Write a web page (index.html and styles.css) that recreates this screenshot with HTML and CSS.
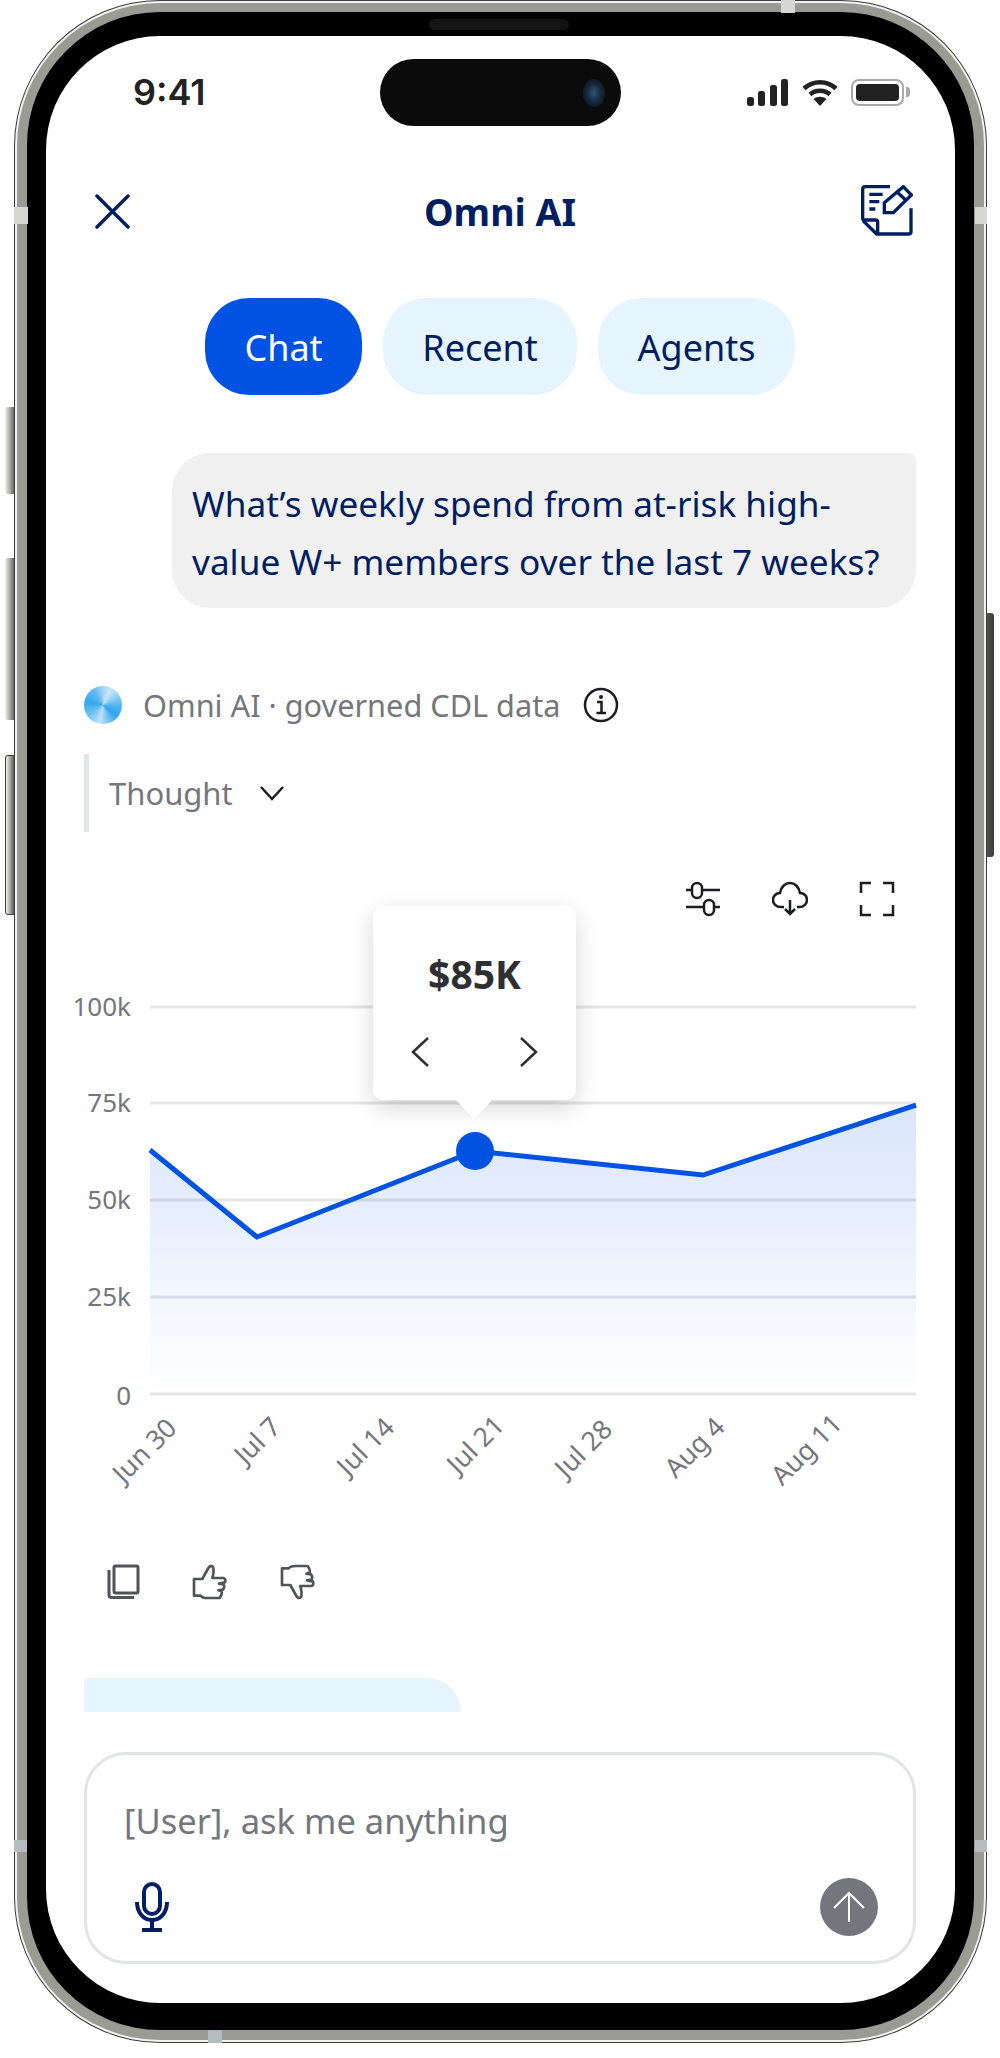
FILE: index.html
```html
<!DOCTYPE html>
<html lang="en">

<head>
  <meta charset="UTF-8">
  <meta name="viewport" content="width=device-width, initial-scale=1.0">
  <title>Omni AI</title>
  <link rel="stylesheet" href="styles.css">
</head>

<body>
  <div class="stage">
    <!-- hardware buttons and antenna bands sit on the frame -->
    <span class="side-btn btn-action"></span>
    <span class="side-btn btn-up"></span>
    <span class="side-btn btn-down"></span>
    <span class="side-btn btn-power"></span>

    <div class="phone">
      <div class="phone-rim">
        <div class="phone-band">
          <div class="phone-bezel">
            <span class="speaker"></span>
            <div class="screen">

              <div class="status-bar">
                <span class="clock">9:41</span>
                <div class="island"><span class="camera"></span></div>
                <div class="status-icons">
                  <svg width="42" height="27" viewBox="0 0 42 27">
                    <rect x="0" y="18" width="7" height="9" rx="2.5" />
                    <rect x="11" y="12" width="7" height="15" rx="2.5" />
                    <rect x="23" y="6" width="7" height="21" rx="2.5" />
                    <rect x="34" y="0" width="7" height="27" rx="2.5" />
                  </svg>
                  <svg width="36" height="27" viewBox="0 0 36 27">
                    <path class="wifi" d="M2 9.5C11 1 25 1 34 9.5M8 15.5C13.500 10.500 22.500 10.500 28 15.500" />
                    <path d="M11.500 20C15 17 21 17 24.500 20L18 27Z" />
                  </svg>
                  <div class="battery"><span class="battery-level"></span></div>
                </div>
              </div>

              <div class="header">
                <svg class="icon-close" width="35" height="35" viewBox="0 0 35 35">
                  <path d="M2 2L33 33M33 2L2 33" />
                </svg>
                <h1>Omni AI</h1>
                <svg class="icon-edit" width="52" height="52" viewBox="63 75 156 156">
                  <path d="M150 80H76Q68 80 68 88V175Q68 180 72 185L110 222H205Q213 222 213 215V145" />
                  <path d="M72 180H106Q113 180 113 187V222" />
                  <path d="M88 103H128M88 125H118M88 147H106" />
                  <path d="M133 158V128L190 80L214 105L160 158ZM172 97L197 120" />
                </svg>
              </div>

              <div class="tabs">
                <a class="tab tab-active">Chat</a>
                <a class="tab tab-recent">Recent</a>
                <a class="tab tab-agents">Agents</a>
              </div>

              <div class="bubble">What’s weekly spend from at-risk high-value W+ members over the last 7 weeks?</div>

              <div class="source">
                <span class="orb"></span>
                <span class="source-text">Omni AI · governed CDL data</span>
                <svg class="icon-info" width="36" height="36" viewBox="0 0 36 36">
                  <circle cx="18" cy="18" r="16" />
                  <path d="M14 15H18.500V26M13.500 26H23" />
                  <circle class="dot" cx="18" cy="10" r="2" />
                </svg>
              </div>

              <div class="thought">
                <span>Thought</span>
                <svg class="icon-chevron" width="26" height="16" viewBox="0 0 26 16">
                  <path d="M2 2L13 14L24 2" />
                </svg>
              </div>

              <div class="chart-tools">
                <svg width="36" height="36" viewBox="0 0 36 36">
                  <path d="M1 9H7M17 9H35M1 26H19M29 26H35" />
                  <rect x="7" y="2" width="10" height="15" rx="5" />
                  <rect x="19" y="19" width="10" height="15" rx="5" />
                </svg>
                <svg width="36" height="36" viewBox="0 0 36 36">
                  <path d="M12 26H9C4 26 1 22.500 1 19C1 15 4 12 8 12C9 6 13 2 18 2C23 2 27 6 28 12C32 12 35 15 35 19C35 22.500 32 26 27 26H25" />
                  <path d="M18 19V33M13 28L18 33L23 28" />
                </svg>
                <svg width="36" height="36" viewBox="0 0 36 36">
                  <path d="M2 12V2H12M24 2H34V12M2 24V34H12M24 34H34V24" />
                </svg>
              </div>

              <div class="chart">
                <svg class="chart-svg" width="908" height="560" viewBox="47 920 908 560">
                  <defs>
                    <linearGradient id="areaFill" x1="0" y1="1105" x2="0" y2="1394" gradientUnits="userSpaceOnUse">
                      <stop offset="0" stop-color="#0053e2" stop-opacity="0.15" />
                      <stop offset="1" stop-color="#0053e2" stop-opacity="0" />
                    </linearGradient>
                  </defs>

                  <g class="grid">
                    <line x1="150" y1="1007" x2="916" y2="1007" />
                    <line x1="150" y1="1103" x2="916" y2="1103" />
                    <line x1="150" y1="1200" x2="916" y2="1200" />
                    <line x1="150" y1="1297" x2="916" y2="1297" />
                    <line x1="150" y1="1394" x2="916" y2="1394" />
                  </g>

                  <g class="y-labels">
                    <text x="131" y="1009">100k</text>
                    <text x="131" y="1105">75k</text>
                    <text x="131" y="1202">50k</text>
                    <text x="131" y="1299">25k</text>
                    <text x="131" y="1398">0</text>
                  </g>

                  <polygon fill="url(#areaFill)" points="150,1150 257,1237 475,1151 703,1175 916,1105 916,1394 150,1394" />
                  <polyline class="line" points="150,1150 257,1237 475,1151 703,1175 916,1105" />
                  <circle class="point" cx="475" cy="1151" r="19" />

                  <g class="x-labels">
                    <text transform="translate(146 1452) rotate(-45)">Jun 30</text>
                    <text transform="translate(259 1442) rotate(-45)">Jul 7</text>
                    <text transform="translate(367 1448) rotate(-45)">Jul 14</text>
                    <text transform="translate(477 1446) rotate(-45)">Jul 21</text>
                    <text transform="translate(585 1450) rotate(-45)">Jul 28</text>
                    <text transform="translate(696 1449) rotate(-45)">Aug 4</text>
                    <text transform="translate(808 1451) rotate(-45)">Aug 11</text>
                  </g>
                </svg>

                <div class="tooltip">
                  <strong>$85K</strong>
                  <div class="tooltip-nav">
                    <svg width="20" height="30" viewBox="0 0 20 30"><path d="M18 1L3 15L18 29" /></svg>
                    <svg width="20" height="30" viewBox="0 0 20 30"><path d="M2 1L17 15L2 29" /></svg>
                  </div>
                </div>
              </div>

              <div class="actions">
                <svg width="34" height="36" viewBox="0 0 34 36">
                  <rect x="7" y="2" width="24" height="27" rx="1.500" />
                  <path d="M2 6V31Q2 33.500 4.500 33.500H27" />
                </svg>
                <svg width="40" height="38" viewBox="300 70 120 114">
                  <path d="M315 118H340L358 85Q365 75 372 82Q376 95 370 115H403Q412 118 408 128L390 132L404 134Q408 142 402 150L388 152L398 155Q400 165 392 175H355Q340 175 335 168H315Z" />
                </svg>
                <svg class="flip" width="40" height="38" viewBox="300 70 120 114">
                  <path d="M315 118H340L358 85Q365 75 372 82Q376 95 370 115H403Q412 118 408 128L390 132L404 134Q408 142 402 150L388 152L398 155Q400 165 392 175H355Q340 175 335 168H315Z" />
                </svg>
              </div>

              <div class="peek"></div>

              <div class="composer">
                <div class="composer-text">[User], ask me anything</div>
                <div class="composer-row">
                  <svg class="icon-mic" width="34" height="50" viewBox="0 0 34 50">
                    <rect x="9" y="2" width="16" height="30" rx="8" />
                    <path d="M2 20C2 30 8 38 17 38C26 38 32 30 32 20M17 38V48M7 48H27" />
                  </svg>
                  <div class="send">
                    <svg width="32" height="32" viewBox="0 0 32 32">
                      <path d="M16 2V31M1 17L16 2L31 17" />
                    </svg>
                  </div>
                </div>
              </div>

            </div>
          </div>
        </div>
      </div>
    </div>

    <span class="band band-top"></span>
    <span class="band band-left"></span>
    <span class="band band-right"></span>
    <span class="band band-bottom"></span>
    <span class="band band-low-left"></span>
    <span class="band band-low-right"></span>
  </div>
</body>

</html>
```

FILE: styles.css
```css
* {
  margin: 0;
  padding: 0;
  box-sizing: border-box;
}

body {
  background-color: #fff;
  font-family: "Noto Sans", "Open Sans", sans-serif;
}

svg {
  display: block;
  fill: none;
  stroke: currentColor;
}

.stage {
  position: relative;
  width: 1000px;
  height: 2058px;
  padding-left: 14px;
}

/* phone frame */
.phone {
  position: relative;
  width: 973px;
  height: 2043px;
  padding: 1px;
  border-radius: 146px;
  background-color: #3c3d38;
}

.phone-rim {
  height: 100%;
  padding: 2px;
  border-radius: 145px;
  background-color: #f2f2ee;
}

.phone-band {
  height: 100%;
  padding: 9px 10px 10px 10px;
  border-radius: 143px;
  background-color: #9a9b92;
}

.phone-bezel {
  position: relative;
  height: 100%;
  padding: 24px 19px 27px 19px;
  border-radius: 133px;
  background-color: #000;
}

.speaker {
  position: absolute;
  left: 402px;
  top: 7px;
  width: 140px;
  height: 11px;
  border-radius: 6px;
  background-color: #141414;
}

.side-btn {
  position: absolute;
  left: 5px;
  width: 10px;
  border-radius: 3px 0 0 3px;
  background: linear-gradient(90deg, #f0f0ec, #a9aaa3 50%, #55564f);
}

.btn-action {
  top: 407px;
  height: 87px;
}

.btn-up {
  top: 558px;
  height: 162px;
}

.btn-down {
  top: 755px;
  height: 160px;
  border: 1px solid #3c3d38;
}

.btn-power {
  left: 986px;
  top: 613px;
  width: 8px;
  height: 244px;
  border-radius: 0 3px 3px 0;
  background: linear-gradient(90deg, #55564f, #3c3d38);
}

.band {
  position: absolute;
  background-color: #d6d6d2;
}

.band-top {
  left: 781px;
  top: 0;
  width: 14px;
  height: 13px;
}

.band-left {
  left: 14px;
  top: 207px;
  width: 14px;
  height: 17px;
}

.band-right {
  left: 975px;
  top: 207px;
  width: 12px;
  height: 17px;
}

.band-bottom {
  left: 208px;
  top: 2030px;
  width: 14px;
  height: 13px;
  background-color: #b4bcc0;
}

.band-low-left {
  left: 14px;
  top: 1840px;
  width: 13px;
  height: 12px;
  background-color: #b4bcc0;
}

.band-low-right {
  left: 975px;
  top: 1840px;
  width: 12px;
  height: 12px;
  background-color: #b4bcc0;
}

/* screen */
.screen {
  height: 100%;
  padding: 23px 39px 0 38px;
  overflow: hidden;
  border-radius: 114px;
  background-color: #fff;
  color: #001e60;
}

.status-bar {
  display: grid;
  grid-template-columns: 1fr 241px 1fr;
  align-items: center;
  height: 67px;
  margin: 0 -39px 0 -38px;
}

.clock {
  padding-left: 87px;
  padding-bottom: 2px;
  font-family: "Inter", sans-serif;
  font-size: 36px;
  font-weight: 600;
  color: #222;
}

.island {
  display: flex;
  align-items: center;
  justify-content: flex-end;
  height: 67px;
  padding-right: 16px;
  border-radius: 34px;
  background-color: #0b0b0b;
}

.camera {
  width: 22px;
  height: 28px;
  border-radius: 50%;
  background: radial-gradient(ellipse at center, #2f5577 0%, #16293c 45%, #0b0b0b 100%);
}

.status-icons {
  display: flex;
  align-items: center;
  justify-content: flex-end;
  gap: 13px;
  padding-right: 51px;
  color: #222;
}

.status-icons svg {
  fill: #222;
  stroke: none;
}

.status-icons .wifi {
  fill: none;
  stroke: #222;
  stroke-width: 4.500px;
}

.battery {
  position: relative;
  width: 53px;
  height: 27px;
  padding: 3px;
  border: 2.500px solid #a9a9a9;
  border-radius: 8px;
}

.battery::after {
  content: "";
  position: absolute;
  right: -8px;
  top: 6px;
  width: 4px;
  height: 10px;
  border-radius: 0 3px 3px 0;
  background-color: #a9a9a9;
}

.battery-level {
  display: block;
  height: 100%;
  border-radius: 4px;
  background-color: #222;
}

.header {
  display: flex;
  align-items: center;
  justify-content: space-between;
  height: 60px;
  margin-top: 55px;
  padding: 0 3px 0 11px;
}

.header h1 {
  margin-left: 9px;
  font-size: 37.500px;
  font-weight: 700;
}

.icon-close {
  stroke-width: 3.500px;
  stroke-linecap: round;
}

.icon-edit {
  stroke-width: 10px;
}

.tabs {
  display: flex;
  justify-content: center;
  gap: 21px;
  margin-top: 57px;
}

.tab {
  display: flex;
  align-items: center;
  justify-content: center;
  height: 97px;
  padding-top: 2px;
  border-radius: 44px;
  background-color: #e6f4fe;
  font-size: 36px;
}

.tab-active {
  width: 157px;
  background-color: #0053e2;
  color: #fff;
}

.tab-recent {
  width: 194px;
}

.tab-agents {
  width: 197px;
}

.bubble {
  width: 744px;
  height: 155px;
  margin-top: 58px;
  margin-left: auto;
  padding: 21px 20px 0;
  border-radius: 38px 8px 38px 38px;
  background-color: #f0f0f0;
  font-size: 35.200px;
  line-height: 58px;
}

.source {
  display: flex;
  align-items: center;
  height: 38px;
  margin-top: 78px;
  color: #74767c;
}

.orb {
  width: 38px;
  height: 38px;
  border-radius: 50%;
  background: conic-gradient(from 0deg at 50% 50%, #9fd4f6 0deg, #c9e6fa 25deg, #4db4f0 95deg, #2ea6ee 130deg, #bfe2f9 190deg, #6cc0f2 235deg, #36aaee 280deg, #63bbf1 330deg, #9fd4f6 360deg);
}

.source-text {
  margin-left: 21px;
  font-size: 30.700px;
}

.icon-info {
  margin-left: 23px;
  color: #1c1d20;
  stroke-width: 2.500px;
}

.icon-info .dot {
  fill: currentColor;
  stroke: none;
}

.thought {
  display: flex;
  align-items: center;
  gap: 26px;
  height: 78px;
  margin-top: 30px;
  padding-left: 20px;
  border-left: 5px solid #e3e4e5;
  color: #74767c;
  font-size: 31px;
}

.icon-chevron {
  color: #1c1d20;
  stroke-width: 2.500px;
}

.chart-tools {
  display: flex;
  justify-content: flex-end;
  gap: 51px;
  margin-top: 49px;
  padding-right: 21px;
  color: #1c1d20;
  stroke-width: 2.500px;
}

.chart {
  position: relative;
  width: 908px;
  height: 560px;
  margin-top: 3px;
  margin-left: -37px;
}

.chart-svg {
  stroke: none;
  overflow: visible;
}

.grid line {
  stroke: #e3e4e5;
  stroke-width: 3px;
}

.y-labels text {
  fill: #74767c;
  font-size: 26px;
  text-anchor: end;
  dominant-baseline: middle;
}

.x-labels text {
  fill: #74767c;
  font-size: 26.500px;
  text-anchor: middle;
  dominant-baseline: middle;
}

.line {
  fill: none;
  stroke: #0053e2;
  stroke-width: 5px;
}

.point {
  fill: #0053e2;
}

.tooltip {
  position: absolute;
  left: 326px;
  top: -14px;
  width: 203px;
  height: 194px;
  padding-top: 44px;
  border-radius: 10px;
  background-color: #fff;
  box-shadow: 0 8px 24px rgba(0, 0, 0, 0.16);
  color: #2e2f32;
  text-align: center;
}

.tooltip::after {
  content: "";
  position: absolute;
  left: 83px;
  bottom: -19px;
  width: 36px;
  height: 19px;
  background-color: #fff;
  clip-path: polygon(0 0, 100% 0, 50% 100%);
}

.tooltip strong {
  display: block;
  font-size: 39px;
  line-height: 48px;
}

.tooltip-nav {
  display: flex;
  justify-content: space-between;
  margin-top: 39px;
  padding: 0 37px;
  stroke-width: 2.500px;
}

.actions {
  display: flex;
  align-items: center;
  gap: 48px;
  height: 38px;
  margin-top: 83px;
  padding-left: 23px;
  color: #515357;
}

.actions svg:first-child {
  stroke-width: 3px;
}

.actions svg:not(:first-child) {
  stroke-width: 8px;
  stroke-linejoin: round;
}

.flip {
  transform: scaleY(-1);
}

.peek {
  width: 377px;
  height: 34px;
  margin-top: 77px;
  border-radius: 6px 44px 0 0;
  background-color: #e6f4fe;
}

.composer {
  height: 212px;
  margin-top: 40px;
  padding: 44px 35px 0 37px;
  border: 3px solid #e3e4e5;
  border-radius: 42px;
}

.composer-text {
  color: #74767c;
  font-size: 34.600px;
  line-height: 44px;
}

.composer-row {
  display: flex;
  align-items: center;
  justify-content: space-between;
  margin-top: 35px;
}

.icon-mic {
  margin-left: 11px;
  stroke-width: 4px;
}

.send {
  display: flex;
  align-items: center;
  justify-content: center;
  width: 58px;
  height: 58px;
  border-radius: 50%;
  background-color: #74767c;
  color: #fff;
  stroke-width: 2px;
}
```
